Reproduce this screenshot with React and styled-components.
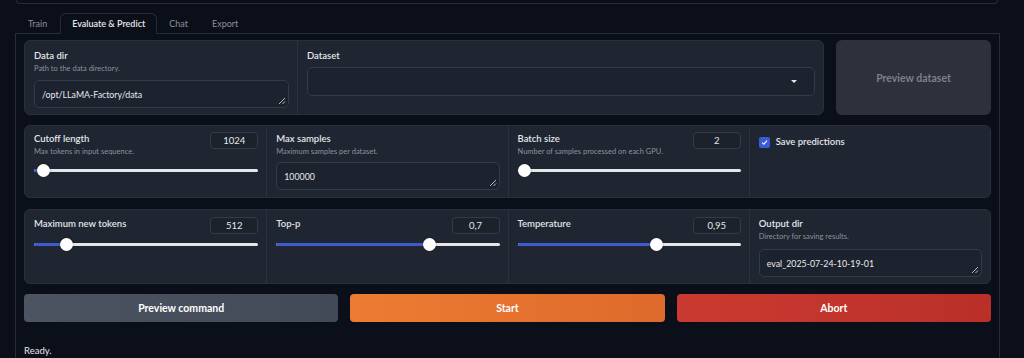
import React from 'react';
import styled, { createGlobalStyle } from 'styled-components';

const GlobalStyle = createGlobalStyle`
body {
  margin: 0;
  background: #0b0f19;
  font-family: Lato, "Noto Sans", sans-serif;
  color: #e5e7eb;
}
`

const Page = styled.div`
width: 1024px;
height: 358px;
overflow: hidden;
`

const TopStub = styled.div`
margin-left: 16px;
width: 980px;
height: 3px;
border: 1px solid #272c37;
border-top: none;
border-radius: 0 0 6px 6px;
`

const Tabs = styled.div`
margin: 10px 0 0 15px;
width: 985px;
`

const TabNav = styled.div`
display: flex;
height: 19px;
border-bottom: 1px solid #272c37;
`

const Tab = styled.div`
padding: 0 ${p => (p.$first ? 12 : 11)}px;
line-height: 19px;
font-size: 9px;
color: ${p => (p.$active ? '#e5e7eb' : '#8b909a')};
font-weight: ${p => (p.$active ? 600 : 400)};
border: 1px solid ${p => (p.$active ? '#272c37' : 'transparent')};
border-bottom-color: ${p => (p.$active ? '#0b0f19' : 'transparent')};
border-radius: 6px 6px 0 0;
margin-bottom: -1px;
margin-top: -1px;
`

const Panel = styled.div`
border: 1px solid #272c37;
border-top: none;
padding: 6px 8px 0;
height: 330px;
display: flex;
flex-direction: column;
`

const Row = styled.div`
display: flex;
gap: 12px;
height: ${p => p.$h}px;
margin-bottom: ${p => p.$gap}px;
`

const Block = styled.div`
flex: 1;
display: grid;
grid-template-columns: ${p => p.$cols};
background: #1f2531;
border: 1px solid #2a303b;
border-radius: 6px;
overflow: hidden;
`

const Cell = styled.div`
padding: ${p => p.$pt ?? 6}px 8px 0 9px;
border-left: ${p => (p.$first ? 'none' : '1px solid #2c323d')};
display: flex;
flex-direction: column;
`

const Head = styled.div`
display: flex;
justify-content: space-between;
align-items: flex-start;
`

const Label = styled.div`
font-size: 9.5px;
font-weight: 600;
line-height: 14px;
color: #e3e5e9;
`

const Desc = styled.div`
font-size: 7.5px;
line-height: 11px;
color: #8d929b;
`

const NumberBox = styled.div`
width: 46px;
height: 15px;
border: 1px solid #343b47;
border-radius: 4px;
font-size: 9.5px;
line-height: 15px;
text-align: center;
color: #e5e7eb;
background: #1c222c;
`

const Field = styled.div`
position: relative;
margin-top: ${p => p.$mt}px;
height: ${p => p.$h ?? 26}px;
border: 1px solid #343b47;
border-radius: 5px;
background: #1d232e;
display: flex;
align-items: center;
padding: 0 7px;
font-size: 8.8px;
color: #e8eaee;
`

const Grip = styled.svg`
position: absolute;
right: 2px;
bottom: 2px;
`

const Caret = styled.div`
position: absolute;
right: 17px;
top: 12px;
width: 0;
height: 0;
border-left: 3px solid transparent;
border-right: 3px solid transparent;
border-top: 3px solid #e5e7eb;
`

const SliderWrap = styled.div`
position: relative;
margin-top: ${p => p.$mt}px;
height: 13px;
`

const Track = styled.div`
position: absolute;
left: 0;
right: 0;
top: 5px;
height: 3px;
border-radius: 2px;
background: #e4e6ea;
`

const Fill = styled.div`
position: absolute;
left: 0;
top: 5px;
height: 3px;
border-radius: 2px;
background: #3d5bd0;
`

const Thumb = styled.div`
position: absolute;
top: 0;
width: 13px;
height: 13px;
border-radius: 50%;
background: #fff;
box-shadow: 0 0 2px rgba(0, 0, 0, 0.4);
`

const CheckRow = styled.label`
display: flex;
align-items: center;
gap: 6px;
margin-top: 3px;
`

const CheckBox = styled.span`
width: 11px;
height: 11px;
border-radius: 2px;
background: #3b5bd6;
display: flex;
align-items: center;
justify-content: center;
`

const GhostButton = styled.div`
width: 155px;
background: #2e313b;
border-radius: 6px;
display: flex;
align-items: center;
justify-content: center;
font-size: 10.5px;
font-weight: 700;
color: #7c808a;
`

const ActionRow = styled.div`
display: flex;
gap: 12px;
height: 28px;
`

const ActionButton = styled.div`
flex: 1;
border-radius: 4px;
display: flex;
align-items: center;
justify-content: center;
font-size: 10.5px;
font-weight: 700;
color: #fff;
background: ${p => p.$bg};
`

const Status = styled.div`
margin-top: 23px;
font-size: 9.5px;
color: #e5e7eb;
`

function ResizeGrip() {
  return (
    <Grip width="8" height="8" viewBox="0 0 8 8">
      <path d="M1 7 L7 1 M4.5 7 L7 4.5" stroke="#c9ccd2" strokeWidth="0.9" />
    </Grip>
  );
}

function Slider({ value, min, max, mt }) {
  const pct = (value - min) / (max - min);
  return (
    <SliderWrap $mt={mt}>
      <Track />
      <Fill style={{ width: `calc(${pct} * (100% - 13px) + 6px)` }} />
      <Thumb style={{ left: `calc(${pct} * (100% - 13px))` }} />
    </SliderWrap>
  );
}

function SliderCell({ first, label, desc, value, shown, min, max }) {
  return (
    <Cell $first={first} $pt={desc ? 6 : 7}>
      <Head>
        <div>
          <Label>{label}</Label>
          {desc && <Desc>{desc}</Desc>}
        </div>
        <NumberBox>{shown}</NumberBox>
      </Head>
      <Slider value={value} min={min} max={max} mt={desc ? 7 : 4} />
    </Cell>
  );
}

export default function App() {
  return (
    <Page>
      <GlobalStyle />
      <TopStub />
      <Tabs>
        <TabNav>
          <Tab $first>Train</Tab>
          <Tab $active>Evaluate &amp; Predict</Tab>
          <Tab>Chat</Tab>
          <Tab>Export</Tab>
        </TabNav>
        <Panel>
          <Row $h={75} $gap={10}>
            <Block $cols="272px 1fr">
              <Cell $first $pt={8}>
                <Label>Data dir</Label>
                <Desc>Path to the data directory.</Desc>
                <Field $mt={6}>
                  /opt/LLaMA-Factory/data
                  <ResizeGrip />
                </Field>
              </Cell>
              <Cell $pt={8}>
                <Label>Dataset</Label>
                <Field $mt={4} $h={27}>
                  <Caret />
                </Field>
              </Cell>
            </Block>
            <GhostButton>Preview dataset</GhostButton>
          </Row>

          <Row $h={73} $gap={11}>
            <Block $cols="repeat(4, 1fr)">
              <SliderCell first label="Cutoff length" desc="Max tokens in input sequence." value={1024} shown="1024" min={4} max={65536} />
              <Cell>
                <Label>Max samples</Label>
                <Desc>Maximum samples per dataset.</Desc>
                <Field $mt={5}>
                  100000
                  <ResizeGrip />
                </Field>
              </Cell>
              <SliderCell label="Batch size" desc="Number of samples processed on each GPU." value={2} shown="2" min={1} max={1024} />
              <Cell>
                <CheckRow>
                  <CheckBox>
                    <svg width="7" height="7" viewBox="0 0 8 8">
                      <path d="M1.3 4.2 L3.2 6 L6.8 1.8" stroke="#fff" strokeWidth="1.3" fill="none" />
                    </svg>
                  </CheckBox>
                  <Label>Save predictions</Label>
                </CheckRow>
              </Cell>
            </Block>
          </Row>

          <Row $h={75} $gap={10}>
            <Block $cols="repeat(4, 1fr)">
              <SliderCell first label="Maximum new tokens" value={512} shown="512" min={8} max={4096} />
              <SliderCell label="Top-p" value={0.7} shown="0,7" min={0.01} max={1} />
              <SliderCell label="Temperature" value={0.95} shown="0,95" min={0.01} max={1.5} />
              <Cell $pt={7}>
                <Label>Output dir</Label>
                <Desc>Directory for saving results.</Desc>
                <Field $mt={7}>
                  eval_2025-07-24-10-19-01
                  <ResizeGrip />
                </Field>
              </Cell>
            </Block>
          </Row>

          <ActionRow>
            <ActionButton $bg="linear-gradient(90deg, #4c5361, #434a57)">Preview command</ActionButton>
            <ActionButton $bg="linear-gradient(90deg, #ec7c33, #de6a2b)">Start</ActionButton>
            <ActionButton $bg="linear-gradient(90deg, #cb3a30, #b93029)">Abort</ActionButton>
          </ActionRow>
          <Status>Ready.</Status>
        </Panel>
      </Tabs>
    </Page>
  );
}
